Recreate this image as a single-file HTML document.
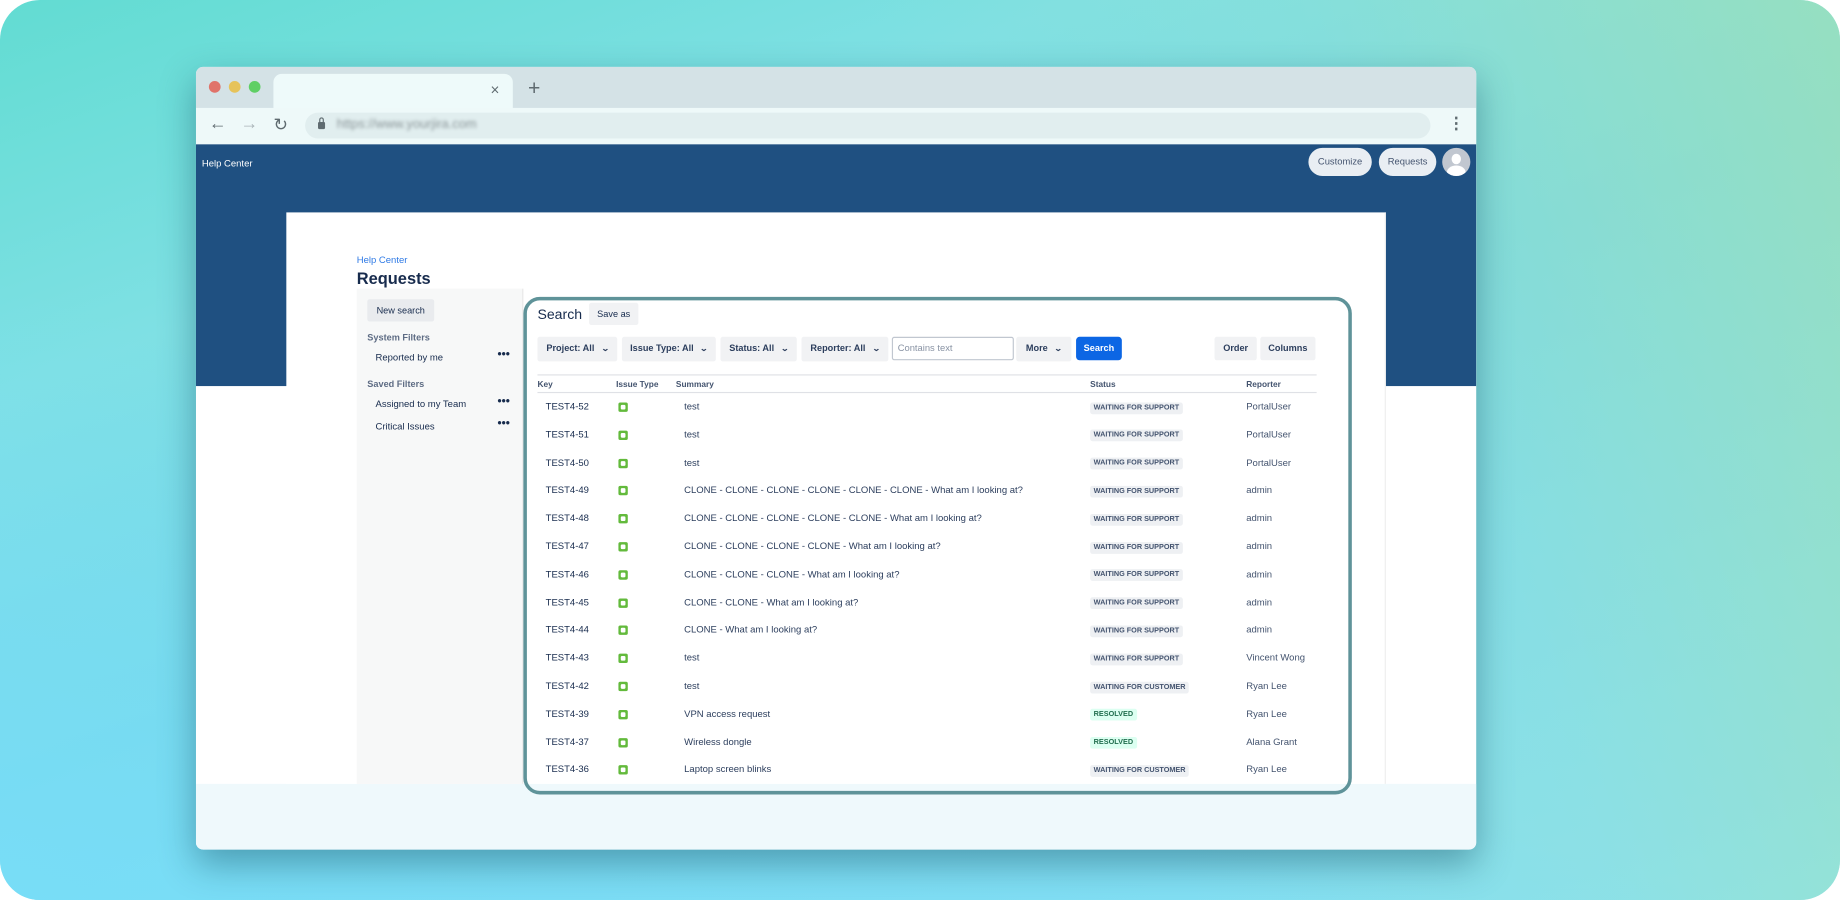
<!DOCTYPE html>
<html><head><meta charset="utf-8">
<style>
html,body{margin:0;padding:0;width:1840px;height:900px;overflow:hidden;background:#fff;}
*{box-sizing:border-box;}
#w{position:absolute;left:0;top:0;width:1568px;height:767px;transform:scale(1.17347);transform-origin:0 0;font-family:"Liberation Sans",sans-serif;}
.bg{position:absolute;left:0;top:0;width:1568px;height:767px;border-radius:34px;overflow:hidden;
background:linear-gradient(160deg,#62dcd2 0%,#7fe0e4 25%,#76d8e8 50%,#7fdcf0 70%,#8ce2f2 100%);}
.bg2{position:absolute;inset:0;background:linear-gradient(250deg,rgba(160,225,180,0.75) 0%,rgba(150,225,200,0.3) 25%,rgba(0,0,0,0) 45%);}
.bg3{position:absolute;inset:0;background:linear-gradient(20deg,rgba(120,222,250,0.8) 0%,rgba(120,222,250,0) 40%);}
.win{position:absolute;left:167px;top:57px;width:1091px;height:667px;border-radius:6px;overflow:hidden;background:#fff;box-shadow:0 12px 30px rgba(20,80,100,0.45);}
.abs{position:absolute;}
.tabbar{left:0;top:0;width:1091px;height:35px;background:#d4e2e6;}
.tab{left:66px;top:6px;width:204px;height:30px;background:#eefafa;border-radius:7px 7px 0 0;}
.dot{width:10px;height:10px;border-radius:50%;top:12px;}
.addr{left:0;top:35px;width:1091px;height:31px;background:#eef9f9;}
.url{left:93px;top:39px;width:959px;height:22px;background:#e1eeef;border-radius:11px;}
.hdr{left:0;top:66px;width:1091px;height:206px;background:#1f5081;}
.bot{left:0;top:611px;width:1091px;height:56px;background:#eff9fc;}
.card{left:77px;top:124px;width:937px;height:487px;background:#fff;border-right:1px solid #eee;}
.pill{height:24px;border-radius:12px;background:#e9eef3;color:#44546f;font-size:8px;line-height:24px;text-align:center;}
.t{position:absolute;white-space:nowrap;color:#172b4d;}
.btn{position:absolute;background:#f1f2f4;border-radius:2px;color:#2c3e5d;font-size:7.8px;font-weight:bold;line-height:20px;text-align:center;}
.chev{display:inline-block;margin-left:6px;font-size:7px;transform:scaleX(1.3);}
.row .t{font-size:8.1px;}
.loz{position:absolute;left:762px;height:10px;line-height:10px;font-size:6.2px;font-weight:bold;padding:0 3px;border-radius:2px;background:#eef0f3;color:#44546f;}
.loz.g{background:#dcfff1;color:#216e4e;}
.ic{position:absolute;left:360px;width:8px;height:8px;background:#63ba3c;border-radius:1.5px;}
.ic:after{content:"";position:absolute;left:2px;top:2px;width:4px;height:4px;background:#fff;border-radius:1px;}
</style></head><body>
<div id="w">
<div class="bg"><div class="bg2"></div><div class="bg3"></div></div>
<div class="win">
  <div class="abs tabbar"></div>
  <div class="abs tab"></div>
  <div class="abs dot" style="left:11px;background:#e0736a"></div>
  <div class="abs dot" style="left:28px;background:#e6c35a"></div>
  <div class="abs dot" style="left:45px;background:#5fcf65"></div>
  <div class="t" style="left:251px;top:12px;font-size:13px;color:#5f6b70">×</div>
  <div class="t" style="left:283px;top:8px;font-size:18px;color:#5f6b70">+</div>
  <div class="abs addr"></div>
  <div class="abs url"></div>
  <div class="t" style="left:11px;top:40px;font-size:15px;color:#5f6b70">←</div>
  <div class="t" style="left:38px;top:40px;font-size:15px;color:#a9b4b8">→</div>
  <div class="t" style="left:66px;top:40px;font-size:15px;color:#5f6b70">↻</div>
  <div class="abs" style="left:104px;top:47px;width:6px;height:6px;background:#5f6b70;border-radius:1px"></div>
  <div class="abs" style="left:105px;top:43px;width:4px;height:6px;border:1.3px solid #5f6b70;border-radius:2px 2px 0 0"></div>
  <div class="t" style="left:120px;top:43px;font-size:11px;color:#8a9598;filter:blur(1.3px)">https://www.yourjira.com</div>
  <div class="t" style="left:1067px;top:40px;font-size:14px;color:#5f6b70;font-weight:bold">⋮</div>
  <div class="abs hdr"></div>
  <div class="t" style="left:5px;top:78px;font-size:8.1px;color:#fff">Help Center</div>
  <div class="abs pill" style="left:948px;top:69px;width:54px">Customize</div>
  <div class="abs pill" style="left:1008px;top:69px;width:49px">Requests</div>
  <div class="abs" style="left:1062px;top:69px;width:24px;height:24px;border-radius:50%;background:#c1c7d0;overflow:hidden">
    <div class="abs" style="left:8px;top:5px;width:8px;height:9px;border-radius:50%;background:#fff"></div>
    <div class="abs" style="left:4px;top:15px;width:16px;height:12px;border-radius:50%;background:#fff"></div>
  </div>
  <div class="abs bot"></div>
  <div class="abs card"></div>
  <div class="t" style="left:137px;top:160px;font-size:8.1px;color:#2f7ae5">Help Center</div>
  <div class="t" style="left:137px;top:172px;font-size:14px;color:#172b4d;font-weight:bold">Requests</div>
  <div class="abs" style="left:137px;top:189px;width:142px;height:422px;background:#f7f8f8;border-right:1px solid #e8e8e8"></div>
  <div class="btn" style="left:146px;top:198px;width:57px;height:19px;background:#e9ebee;font-weight:normal;color:#172b4d">New search</div>
  <div class="t" style="left:146px;top:226px;font-size:7.8px;font-weight:bold;color:#5e6c84">System Filters</div>
  <div class="t" style="left:153px;top:243px;font-size:8.1px">Reported by me</div>
  <div class="t" style="left:257px;top:240px;font-size:10px;font-weight:bold">•••</div>
  <div class="t" style="left:146px;top:266px;font-size:7.8px;font-weight:bold;color:#5e6c84">Saved Filters</div>
  <div class="t" style="left:153px;top:283px;font-size:8.1px">Assigned to my Team</div>
  <div class="t" style="left:257px;top:280px;font-size:10px;font-weight:bold">•••</div>
  <div class="t" style="left:153px;top:302px;font-size:8.1px">Critical Issues</div>
  <div class="t" style="left:257px;top:299px;font-size:10px;font-weight:bold">•••</div>

  <div class="abs" style="left:279px;top:196px;width:706px;height:424px;border:3px solid #5f9399;border-radius:14px"></div>
  <div class="t" style="left:291px;top:204px;font-size:12px">Search</div>
  <div class="btn" style="left:335px;top:201px;width:42px;height:19px;font-weight:normal;color:#172b4d">Save as</div>
  <div class="btn" style="left:291px;top:230px;width:68px">Project: All<span class="chev">⌄</span></div>
  <div class="btn" style="left:363px;top:230px;width:80px">Issue Type: All<span class="chev">⌄</span></div>
  <div class="btn" style="left:447px;top:230px;width:65px">Status: All<span class="chev">⌄</span></div>
  <div class="btn" style="left:516px;top:230px;width:74px">Reporter: All<span class="chev">⌄</span></div>
  <div class="abs" style="left:593px;top:230px;width:104px;height:20px;border:1px solid #c1c7d0;border-radius:2px;background:#fff"></div>
  <div class="t" style="left:598px;top:235px;font-size:8px;color:#8993a4">Contains text</div>
  <div class="btn" style="left:699px;top:230px;width:47px">More<span class="chev">⌄</span></div>
  <div class="btn" style="left:750px;top:230px;width:39px;background:#0c66e4;color:#fff;border-radius:3px">Search</div>
  <div class="btn" style="left:868px;top:230px;width:36px">Order</div>
  <div class="btn" style="left:907px;top:230px;width:47px">Columns</div>
  <div class="abs" style="left:291px;top:262px;width:664px;height:1px;background:#dfe1e6"></div>
  <div class="abs" style="left:291px;top:277px;width:664px;height:1px;background:#dfe1e6"></div>
  <div class="t" style="left:291px;top:267px;font-size:7.1px;font-weight:bold;color:#44546f">Key</div>
  <div class="t" style="left:358px;top:267px;font-size:7.1px;font-weight:bold;color:#44546f">Issue Type</div>
  <div class="t" style="left:409px;top:267px;font-size:7.1px;font-weight:bold;color:#44546f">Summary</div>
  <div class="t" style="left:762px;top:267px;font-size:7.1px;font-weight:bold;color:#44546f">Status</div>
  <div class="t" style="left:895px;top:267px;font-size:7.1px;font-weight:bold;color:#44546f">Reporter</div>
  <div id="rows"></div>
</div>
</div>
<script>
var d=[["TEST4-52","test","WAITING FOR SUPPORT","PortalUser"],["TEST4-51","test","WAITING FOR SUPPORT","PortalUser"],["TEST4-50","test","WAITING FOR SUPPORT","PortalUser"],["TEST4-49","CLONE - CLONE - CLONE - CLONE - CLONE - CLONE - What am I looking at?","WAITING FOR SUPPORT","admin"],["TEST4-48","CLONE - CLONE - CLONE - CLONE - CLONE - What am I looking at?","WAITING FOR SUPPORT","admin"],["TEST4-47","CLONE - CLONE - CLONE - CLONE - What am I looking at?","WAITING FOR SUPPORT","admin"],["TEST4-46","CLONE - CLONE - CLONE - What am I looking at?","WAITING FOR SUPPORT","admin"],["TEST4-45","CLONE - CLONE - What am I looking at?","WAITING FOR SUPPORT","admin"],["TEST4-44","CLONE - What am I looking at?","WAITING FOR SUPPORT","admin"],["TEST4-43","test","WAITING FOR SUPPORT","Vincent Wong"],["TEST4-42","test","WAITING FOR CUSTOMER","Ryan Lee"],["TEST4-39","VPN access request","RESOLVED","Ryan Lee"],["TEST4-37","Wireless dongle","RESOLVED","Alana Grant"],["TEST4-36","Laptop screen blinks","WAITING FOR CUSTOMER","Ryan Lee"]];
var h="";
d.forEach(function(r,i){var y=286+i*23.8;
h+='<div class="row"><div class="t" style="left:298px;top:'+(y-1)+'px">'+r[0]+'</div><div class="ic" style="top:'+(y)+'px"></div><div class="t" style="left:416px;top:'+(y-1)+'px;color:#2c3e5d">'+r[1]+'</div><div class="loz'+(r[2]=="RESOLVED"?" g":"")+'" style="top:'+(y-0.5)+'px">'+r[2]+'</div><div class="t" style="left:895px;top:'+(y-1)+'px;color:#44546f">'+r[3]+'</div></div>';});
document.getElementById("rows").outerHTML=h;
</script>
</body></html>
